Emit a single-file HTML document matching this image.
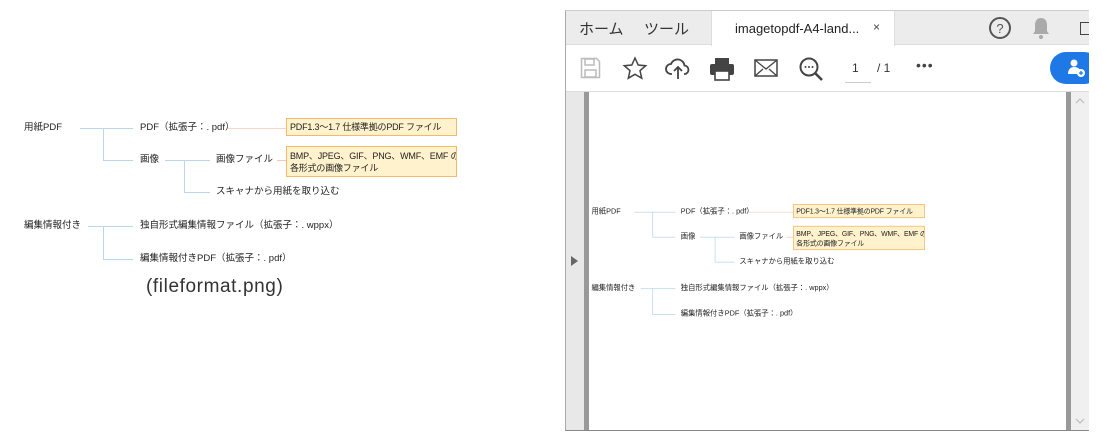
<!DOCTYPE html>
<html><head><meta charset="utf-8"><style>
*{margin:0;padding:0;box-sizing:border-box}
body{width:1107px;height:438px;background:#fff;position:relative;overflow:hidden;font-family:"Liberation Sans","Noto Sans CJK JP",sans-serif;color:#222}
.a{position:absolute}
.dg{position:absolute;width:480px;height:160px}
.dg .t{position:absolute;font-size:9.5px;white-space:nowrap;line-height:12px;transform:translateY(-6px)}
.dg .h{position:absolute;height:1px;background:#bcd6ee}
.dg .v{position:absolute;width:1px;background:#bcd6ee}
.dg .bx{position:absolute;background:#fff2cc;border:1px solid #f4b96a;font-size:9px;line-height:12px;padding:2px 3px;color:#222;white-space:nowrap;letter-spacing:-0.2px;overflow:hidden}
</style></head><body>

<div class="dg" style="left:0;top:100px">
 <div class="t" style="left:24px;top:28px">用紙PDF</div>
 <div class="h" style="left:80px;top:28px;width:53px"></div>
 <div class="v" style="left:103px;top:28px;height:32px"></div>
 <div class="h" style="left:103px;top:60px;width:30px"></div>
 <div class="t" style="left:140px;top:28px">PDF（拡張子：. pdf）</div>
 <div class="h" style="left:228px;top:28px;width:58px;background:#f8d5c4"></div>
 <div class="bx" style="left:286px;top:18px;width:171px;height:18px">PDF1.3〜1.7 仕様準拠のPDF ファイル</div>
 <div class="t" style="left:140px;top:60px">画像</div>
 <div class="h" style="left:165px;top:60px;width:45px"></div>
 <div class="v" style="left:184px;top:60px;height:32px"></div>
 <div class="h" style="left:184px;top:92px;width:26px"></div>
 <div class="t" style="left:216px;top:60px">画像ファイル</div>
 <div class="h" style="left:277px;top:60px;width:9px;background:#f8c8b0"></div>
 <div class="bx" style="left:286px;top:46px;width:171px;height:31px;padding-top:3px">BMP、JPEG、GIF、PNG、WMF、EMF の<br>各形式の画像ファイル</div>
 <div class="t" style="left:216px;top:92px">スキャナから用紙を取り込む</div>
 <div class="t" style="left:24px;top:126px">編集情報付き</div>
 <div class="h" style="left:88px;top:126px;width:45px"></div>
 <div class="v" style="left:103px;top:126px;height:33px"></div>
 <div class="h" style="left:103px;top:159px;width:30px"></div>
 <div class="t" style="left:140px;top:126px">独自形式編集情報ファイル（拡張子：. wppx）</div>
 <div class="t" style="left:140px;top:159px">編集情報付きPDF（拡張子：. pdf）</div>
</div>
<div class="a" style="left:146px;top:276px;font-size:19px;line-height:22px;color:#333;letter-spacing:0.6px">(fileformat.png)</div>

<div class="a" style="left:0;top:0;width:1089px;height:438px;overflow:hidden">
<div class="a" style="left:565px;top:10px;width:530px;height:421px;border-left:1px solid #aaa;border-top:1px solid #ccc;border-bottom:1px solid #888;background:#fff"></div>
<div class="a" style="left:566px;top:11px;width:530px;height:34px;background:#ececec;border-bottom:1px solid #ddd"></div>
<div class="a" style="left:579px;top:18px;font-size:15px;color:#333">ホーム</div>
<div class="a" style="left:644px;top:18px;font-size:15px;color:#333">ツール</div>
<div class="a" style="left:711px;top:11px;width:184px;height:35px;background:#fff;border-left:1px solid #ddd;border-right:1px solid #ddd"></div>
<div class="a" style="left:735px;top:21px;font-size:13px;color:#222">imagetopdf-A4-land...</div>
<div class="a" style="left:873px;top:20px;font-size:12px;color:#444">×</div>
<svg class="a" style="left:988px;top:16px" width="24" height="24"><circle cx="12" cy="12" r="10" fill="none" stroke="#555" stroke-width="2"/><text x="12" y="17" font-size="13" text-anchor="middle" fill="#555" font-family="Liberation Sans">?</text></svg>
<svg class="a" style="left:1031px;top:16px" width="20" height="24"><path d="M10 2c-4 0-6 3-6 7v6l-2 3h16l-2-3V9c0-4-2-7-6-7z" fill="#aaa"/><circle cx="10" cy="21" r="2" fill="#aaa"/></svg>
<div class="a" style="left:1080px;top:22px;width:12px;height:13px;border:1.5px solid #444"></div>
<div class="a" style="left:566px;top:91px;width:530px;height:1px;background:#ddd"></div>
<svg class="a" style="left:580px;top:57px" width="21" height="22"><path d="M1.5 1.5h15l3 3v16h-18z" fill="none" stroke="#bbb" stroke-width="1.5"/><rect x="5" y="2" width="9" height="6" fill="none" stroke="#bbb" stroke-width="1.5"/><rect x="5" y="13" width="11" height="7" fill="none" stroke="#bbb" stroke-width="1.5"/></svg>
<svg class="a" style="left:622px;top:56px" width="26" height="25"><path d="M13 2l3.2 7 7.5.7-5.7 5 1.7 7.5L13 18.3 6.3 22.2 8 14.7 2.3 9.7l7.5-.7z" fill="none" stroke="#444" stroke-width="1.5"/></svg>
<svg class="a" style="left:665px;top:56px" width="26" height="25"><path d="M7 18H6a5 5 0 0 1 0-10 7 7 0 0 1 13.5 1.5A4.3 4.3 0 0 1 20 18h-1" fill="none" stroke="#444" stroke-width="1.8"/><path d="M13 23V11M9 15l4-4 4 4" fill="none" stroke="#444" stroke-width="1.8"/></svg>
<svg class="a" style="left:709px;top:57px" width="26" height="24"><rect x="6" y="1" width="14" height="6" fill="#444"/><rect x="1" y="7" width="24" height="11" rx="2" fill="#444"/><rect x="6" y="14" width="14" height="9" fill="#fff" stroke="#444" stroke-width="1.6"/></svg>
<svg class="a" style="left:754px;top:59px" width="24" height="18"><rect x="1" y="1" width="22" height="16" fill="none" stroke="#444" stroke-width="1.5"/><path d="M1 1l11 9 11-9M1 17l8-7M23 17l-8-7" fill="none" stroke="#444" stroke-width="1.3"/></svg>
<svg class="a" style="left:798px;top:56px" width="28" height="28"><circle cx="11" cy="11" r="8.5" fill="none" stroke="#444" stroke-width="2"/><path d="M17 17l7 7" stroke="#444" stroke-width="2.6"/><circle cx="7.5" cy="11" r="1" fill="#444"/><circle cx="11" cy="11" r="1" fill="#444"/><circle cx="14.5" cy="11" r="1" fill="#444"/></svg>
<div class="a" style="left:852px;top:61px;font-size:12px;color:#333">1</div>
<div class="a" style="left:845px;top:82px;width:26px;height:1px;background:#ccc"></div>
<div class="a" style="left:877px;top:61px;font-size:12px;color:#333">/ 1</div>
<div class="a" style="left:916px;top:57px;font-size:14px;color:#444;letter-spacing:1px">•••</div>
<div class="a" style="left:1050px;top:52px;width:50px;height:32px;border-radius:16px;background:#1e78e6"></div>
<svg class="a" style="left:1066px;top:58px" width="20" height="20"><circle cx="8" cy="5" r="3.5" fill="#fff"/><path d="M2 16c0-5 3-7 6-7s5 1 6 3v4z" fill="#fff"/><circle cx="15" cy="15" r="4" fill="#fff"/><path d="M15 13v4M13 15h4" stroke="#1e78e6" stroke-width="1.3"/></svg>
<div class="a" style="left:566px;top:92px;width:18px;height:338px;background:#e8e8e8"></div>
<div class="a" style="left:584px;top:92px;width:5px;height:338px;background:#999"></div>
<svg class="a" style="left:570px;top:255px" width="10" height="12"><path d="M1 1l7 5-7 5z" fill="#666"/></svg>
<div class="a" style="left:1066px;top:92px;width:5px;height:338px;background:#999"></div>
<div class="a" style="left:1071px;top:92px;width:18px;height:338px;background:#f0f0f0"></div>
<svg class="a" style="left:1075px;top:97px" width="10" height="8"><path d="M1 6l4-4 4 4" fill="none" stroke="#bbb" stroke-width="1.2"/></svg>
<svg class="a" style="left:1075px;top:417px" width="10" height="8"><path d="M1 2l4 4 4-4" fill="none" stroke="#bbb" stroke-width="1.2"/></svg>
</div>

<div class="dg" style="left:572.6px;top:190.2px;transform:scale(0.77,0.78);transform-origin:0 0">
 <div class="t" style="left:24px;top:28px">用紙PDF</div>
 <div class="h" style="left:80px;top:28px;width:53px"></div>
 <div class="v" style="left:103px;top:28px;height:32px"></div>
 <div class="h" style="left:103px;top:60px;width:30px"></div>
 <div class="t" style="left:140px;top:28px">PDF（拡張子：. pdf）</div>
 <div class="h" style="left:228px;top:28px;width:58px;background:#f8d5c4"></div>
 <div class="bx" style="left:286px;top:18px;width:171px;height:18px">PDF1.3〜1.7 仕様準拠のPDF ファイル</div>
 <div class="t" style="left:140px;top:60px">画像</div>
 <div class="h" style="left:165px;top:60px;width:45px"></div>
 <div class="v" style="left:184px;top:60px;height:32px"></div>
 <div class="h" style="left:184px;top:92px;width:26px"></div>
 <div class="t" style="left:216px;top:60px">画像ファイル</div>
 <div class="h" style="left:277px;top:60px;width:9px;background:#f8c8b0"></div>
 <div class="bx" style="left:286px;top:46px;width:171px;height:31px;padding-top:3px">BMP、JPEG、GIF、PNG、WMF、EMF の<br>各形式の画像ファイル</div>
 <div class="t" style="left:216px;top:92px">スキャナから用紙を取り込む</div>
 <div class="t" style="left:24px;top:126px">編集情報付き</div>
 <div class="h" style="left:88px;top:126px;width:45px"></div>
 <div class="v" style="left:103px;top:126px;height:33px"></div>
 <div class="h" style="left:103px;top:159px;width:30px"></div>
 <div class="t" style="left:140px;top:126px">独自形式編集情報ファイル（拡張子：. wppx）</div>
 <div class="t" style="left:140px;top:159px">編集情報付きPDF（拡張子：. pdf）</div>
</div>
</body></html>
